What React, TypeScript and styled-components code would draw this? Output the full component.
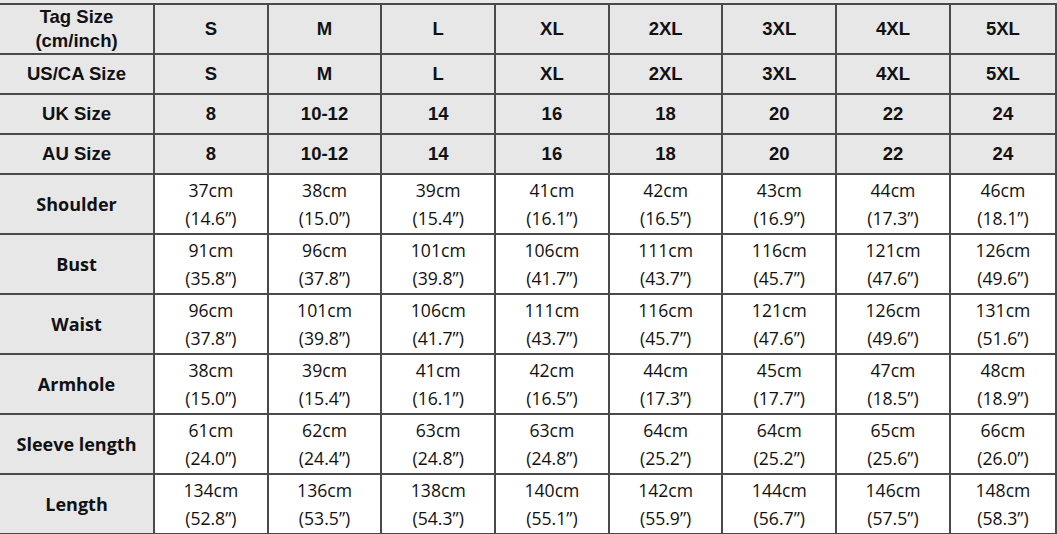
import React from "react";
import styled, { createGlobalStyle } from "styled-components";

const Global = createGlobalStyle`
  html, body { margin: 0; padding: 0; background: #e8e8e8; }
  body { width: 1057px; height: 534px; overflow: hidden; }
`;

const Grid = styled.div`
  margin-top: 3px;
  width: 1057px;
  display: grid;
  grid-template-columns: 153px repeat(7, 111.7px) 1fr;
  grid-template-rows: 48px 38px 38px 38px repeat(6, 58px);
  gap: 2px;
  padding: 2px 2px 2px 0;
  box-sizing: border-box;
  background: #4a4a4a;
`;

const Cell = styled.div<{ $shaded?: boolean; $bold?: boolean; $label?: boolean }>`
  background: ${(p) => (p.$shaded ? "#e7e7e7" : "#ffffff")};
  color: #111111;
  display: flex;
  flex-direction: column;
  align-items: center;
  justify-content: center;
  text-align: center;
  font-family: ${(p) =>
    p.$bold && !p.$label ? '"Liberation Sans", Arial, sans-serif' : '"Open Sans", sans-serif'};
  font-weight: ${(p) => (p.$bold || p.$label ? 700 : 400)};
  font-size: ${(p) => (p.$label ? "18px" : p.$bold ? "18.5px" : "17.6px")};
  line-height: ${(p) => (p.$bold ? "24px" : "28px")};
  white-space: nowrap;
`;

const sizes = ["S", "M", "L", "XL", "2XL", "3XL", "4XL", "5XL"];
const uk = ["8", "10-12", "14", "16", "18", "20", "22", "24"];

const measures: [string, [number, string][]][] = [
  ["Shoulder", [[37, "14.6"], [38, "15.0"], [39, "15.4"], [41, "16.1"], [42, "16.5"], [43, "16.9"], [44, "17.3"], [46, "18.1"]]],
  ["Bust", [[91, "35.8"], [96, "37.8"], [101, "39.8"], [106, "41.7"], [111, "43.7"], [116, "45.7"], [121, "47.6"], [126, "49.6"]]],
  ["Waist", [[96, "37.8"], [101, "39.8"], [106, "41.7"], [111, "43.7"], [116, "45.7"], [121, "47.6"], [126, "49.6"], [131, "51.6"]]],
  ["Armhole", [[38, "15.0"], [39, "15.4"], [41, "16.1"], [42, "16.5"], [44, "17.3"], [45, "17.7"], [47, "18.5"], [48, "18.9"]]],
  ["Sleeve length", [[61, "24.0"], [62, "24.4"], [63, "24.8"], [63, "24.8"], [64, "25.2"], [64, "25.2"], [65, "25.6"], [66, "26.0"]]],
  ["Length", [[134, "52.8"], [136, "53.5"], [138, "54.3"], [140, "55.1"], [142, "55.9"], [144, "56.7"], [146, "57.5"], [148, "58.3"]]],
];

export default function App() {
  return (
    <>
      <Global />
      <Grid>
        <Cell $shaded $bold>
          <span>Tag Size</span>
          <span>(cm/inch)</span>
        </Cell>
        {sizes.map((s) => (
          <Cell key={"t" + s} $shaded $bold>{s}</Cell>
        ))}
        <Cell $shaded $bold>US/CA Size</Cell>
        {sizes.map((s) => (
          <Cell key={"u" + s} $shaded $bold>{s}</Cell>
        ))}
        <Cell $shaded $bold>UK Size</Cell>
        {uk.map((s, i) => (
          <Cell key={"k" + i} $shaded $bold>{s}</Cell>
        ))}
        <Cell $shaded $bold>AU Size</Cell>
        {uk.map((s, i) => (
          <Cell key={"a" + i} $shaded $bold>{s}</Cell>
        ))}
        {measures.map(([name, vals]) => (
          <React.Fragment key={name}>
            <Cell $shaded $label>{name}</Cell>
            {vals.map(([cm, inch], i) => (
              <Cell key={name + i}>
                <span>{cm}cm</span>
                <span>({inch}”)</span>
              </Cell>
            ))}
          </React.Fragment>
        ))}
      </Grid>
    </>
  );
}
